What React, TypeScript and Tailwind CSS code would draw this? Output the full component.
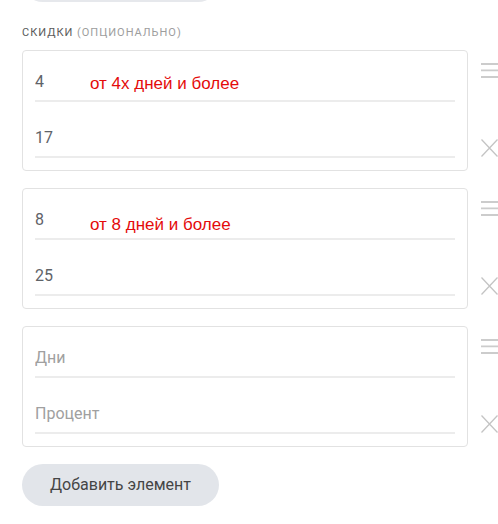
import { useState } from 'react'

type Discount = { days: string; percent: string; note?: string; noteTop?: number }

const initial: Discount[] = [
  { days: '4', percent: '17', note: 'от 4х дней и более', noteTop: 0 },
  { days: '8', percent: '25', note: 'от 8 дней и более', noteTop: 3 },
  { days: '', percent: '' },
]

function Field({ value, placeholder, note, noteTop }: { value: string; placeholder: string; note?: string; noteTop?: number }) {
  return (
    <div className="relative h-[32px] border-b-2 border-[#ececec] pb-[6px]">
      <input
        defaultValue={value}
        placeholder={placeholder}
        className="block h-[24px] w-full bg-transparent text-[16px] leading-[24px] text-[#5f6368] placeholder-[#a0a0a0] outline-none"
      />
      {note && (
        <span
          className="pointer-events-none absolute left-[55px] top-0 text-[17px] leading-[24px] text-[#e40b0b] font-['Liberation_Sans',Arial,sans-serif]"
          style={{ top: (noteTop ?? 0) + 2 }}
        >
          {note}
        </span>
      )}
    </div>
  )
}

function HandleIcon() {
  return (
    <svg width="17" height="15" viewBox="0 0 17 15" fill="none">
      <path d="M0 1h17M0 7.3h17M0 14h17" stroke="#cccccc" strokeWidth="1.8" />
    </svg>
  )
}

function CloseIcon() {
  return (
    <svg width="17" height="18" viewBox="0 0 17 18" fill="none">
      <path d="M0.5 0.5L16.5 17.5M16.5 0.5L0.5 17.5" stroke="#c4c4c4" strokeWidth="1.3" />
    </svg>
  )
}

export default function App() {
  const [items, setItems] = useState(initial)

  return (
    <div className="min-h-[524px] w-[498px] overflow-hidden bg-white pl-[22px] font-['Roboto','Noto_Sans',sans-serif]">
      {/* previous add button, mostly scrolled away */}
      <div className="-mt-[40px] h-[42px] w-[197px] rounded-full bg-[#e6e8ec]" />

      <div className="mt-[23px] h-[16px] text-[11px] uppercase leading-[16px] tracking-[0.09em]">
        <span className="text-[#5a5a5a]">Скидки</span>{' '}
        <span className="text-[#9d9d9d]">(опционально)</span>
      </div>

      <div className="mt-[9px] flex flex-col gap-[17px]">
        {items.map((it, i) => (
          <div key={i} className="flex">
            <div className="w-[446px] shrink-0 rounded-[4px] border border-[#e2e2e2] px-[12px] pb-[12px] pt-[19px]">
              <Field value={it.days} placeholder="Дни" note={it.note} noteTop={it.noteTop} />
              <div className="mt-[24px]">
                <Field value={it.percent} placeholder="Процент" />
              </div>
            </div>
            <div className="ml-[13px] flex w-[17px] shrink-0 flex-col pt-[13px]">
              <HandleIcon />
              <button
                className="mt-[61px] cursor-pointer"
                onClick={() => setItems(items.filter((_, j) => j !== i))}
              >
                <CloseIcon />
              </button>
            </div>
          </div>
        ))}
      </div>

      <button
        className="mt-[17px] h-[42px] w-[197px] rounded-full bg-[#e2e5ea] text-[16px] text-[#454545]"
        onClick={() => setItems([...items, { days: '', percent: '' }])}
      >
        Добавить элемент
      </button>
    </div>
  )
}
